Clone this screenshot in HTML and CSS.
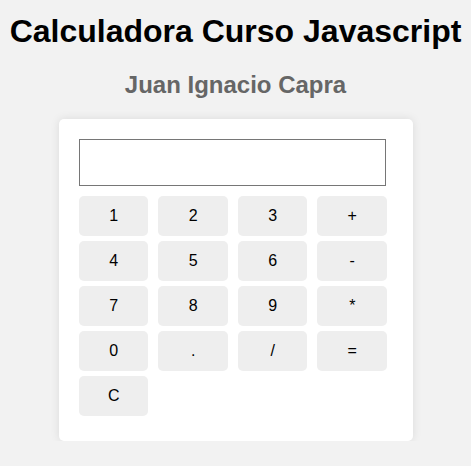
FILE: index.html
```html
<!DOCTYPE html>
<html lang="es">
<head>
<meta charset="utf-8">
<title>Calculadora</title>
<link rel="stylesheet" href="styles.css">
</head>
<body>
<h1 class="title">Calculadora Curso Javascript</h1>
<h2 class="subtitle">Juan Ignacio Capra</h2>
<div class="calculator">
  <input class="display" type="text">
  <div class="keys">
    <button class="key">1</button>
    <button class="key">2</button>
    <button class="key">3</button>
    <button class="key">+</button>
    <button class="key">4</button>
    <button class="key">5</button>
    <button class="key">6</button>
    <button class="key">-</button>
    <button class="key">7</button>
    <button class="key">8</button>
    <button class="key">9</button>
    <button class="key">*</button>
    <button class="key">0</button>
    <button class="key">.</button>
    <button class="key">/</button>
    <button class="key">=</button>
    <button class="key">C</button>
  </div>
</div>
</body>
</html>
```
FILE: styles.css
```css
html, body {
  margin: 0;
  padding: 0;
}
body {
  background: #f2f2f2;
  font-family: "Liberation Sans", Arial, sans-serif;
  display: flex;
  flex-direction: column;
  align-items: center;
}
.title {
  margin: 13px 0 21px;
  font-size: 32px;
  font-weight: bold;
  color: #000;
  text-align: center;
}
.subtitle {
  margin: 0 0 20px;
  font-size: 24px;
  font-weight: bold;
  color: #666;
  text-align: center;
}
.calculator {
  background: #fff;
  border-radius: 5px;
  box-shadow: 0 0 10px rgba(0, 0, 0, 0.1);
  padding: 20px 26px 25px 20px;
  width: 308px;
}
.display {
  display: block;
  box-sizing: border-box;
  width: 307px;
  height: 47px;
  margin: 0 0 10px;
  border: 1px solid #767676;
  border-radius: 0;
  font-size: 20px;
  padding: 0 8px;
  background: #fff;
}
.keys {
  display: grid;
  grid-template-columns: repeat(4, 69.5px);
  column-gap: 10px;
  row-gap: 5px;
}
.key {
  height: 40px;
  border: none;
  border-radius: 5px;
  background: #eeeeee;
  color: #000;
  font-family: "Liberation Sans", Arial, sans-serif;
  font-size: 16px;
  padding: 0 0 0 1px;
}
```
